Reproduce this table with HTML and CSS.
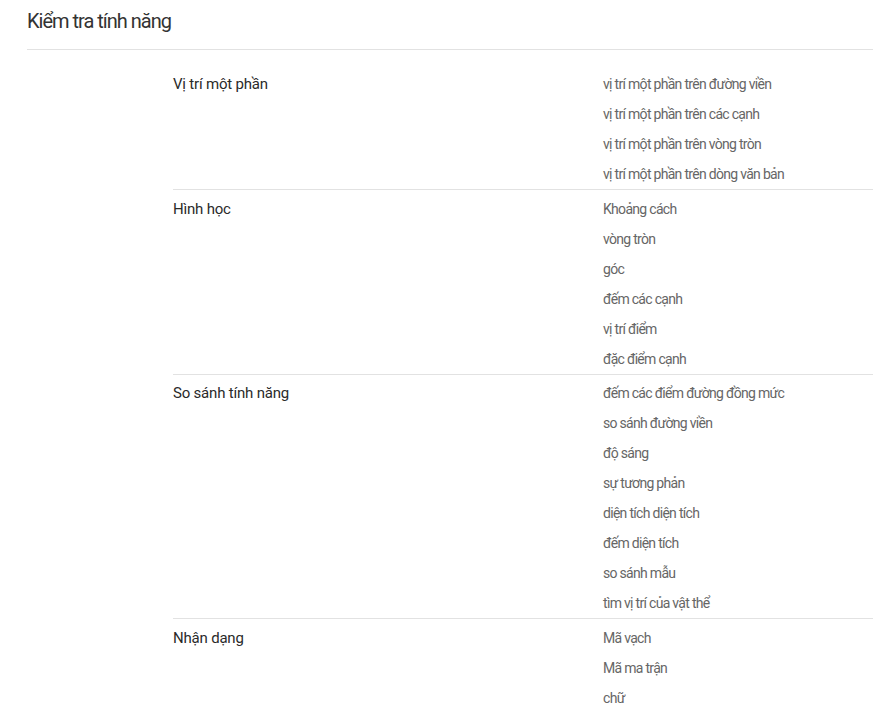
FILE: index.html
```html
<!DOCTYPE html>
<html lang="vi">
<head>
<meta charset="utf-8">
<title>Kiểm tra tính năng</title>
<link rel="stylesheet" href="styles.css">
</head>
<body>
<div class="page">
  <h1 class="title">Kiểm tra tính năng</h1>
  <div class="table">
    <div class="row first">
      <div class="label">Vị trí một phần</div>
      <ul class="values">
        <li>vị trí một phần trên đường viền</li>
        <li>vị trí một phần trên các cạnh</li>
        <li>vị trí một phần trên vòng tròn</li>
        <li>vị trí một phần trên dòng văn bản</li>
      </ul>
    </div>
    <div class="row">
      <div class="label">Hình học</div>
      <ul class="values">
        <li>Khoảng cách</li>
        <li>vòng tròn</li>
        <li>góc</li>
        <li>đếm các cạnh</li>
        <li>vị trí điểm</li>
        <li>đặc điểm cạnh</li>
      </ul>
    </div>
    <div class="row">
      <div class="label">So sánh tính năng</div>
      <ul class="values">
        <li>đếm các điểm đường đồng mức</li>
        <li>so sánh đường viền</li>
        <li>độ sáng</li>
        <li>sự tương phản</li>
        <li>diện tích diện tích</li>
        <li>đếm diện tích</li>
        <li>so sánh mẫu</li>
        <li>tìm vị trí của vật thể</li>
      </ul>
    </div>
    <div class="row">
      <div class="label">Nhận dạng</div>
      <ul class="values">
        <li>Mã vạch</li>
        <li>Mã ma trận</li>
        <li>chữ</li>
      </ul>
    </div>
  </div>
</div>
</body>
</html>
```

FILE: styles.css
```css
html, body {
  margin: 0;
  padding: 0;
  background: #ffffff;
}

body {
  font-family: Roboto, "Noto Sans", "Liberation Sans", sans-serif;
  color: #333333;
  overflow: hidden;
}

.page {
  padding-left: 27px;
}

.title {
  margin: 0;
  font-size: 20px;
  font-weight: 400;
  letter-spacing: -1px;
  line-height: 42px;
  padding-bottom: 7px;
  color: #333333;
  border-bottom: 1px solid #e2e2e2;
}

.table {
  margin-left: 146px;
}

.row {
  display: flex;
  padding-top: 3.5px;
  border-top: 1px solid #e2e2e2;
}

.row.first {
  border-top: none;
  padding-top: 19px;
}

.label {
  width: 430px;
  flex: none;
  font-size: 15px;
  letter-spacing: -0.2px;
  line-height: 30px;
  color: #2a2a2a;
}

.values {
  list-style: none;
  margin: 0;
  padding: 0;
  flex: 1;
}

.values li {
  font-size: 14px;
  letter-spacing: -0.7px;
  line-height: 30px;
  color: #666666;
}
```
